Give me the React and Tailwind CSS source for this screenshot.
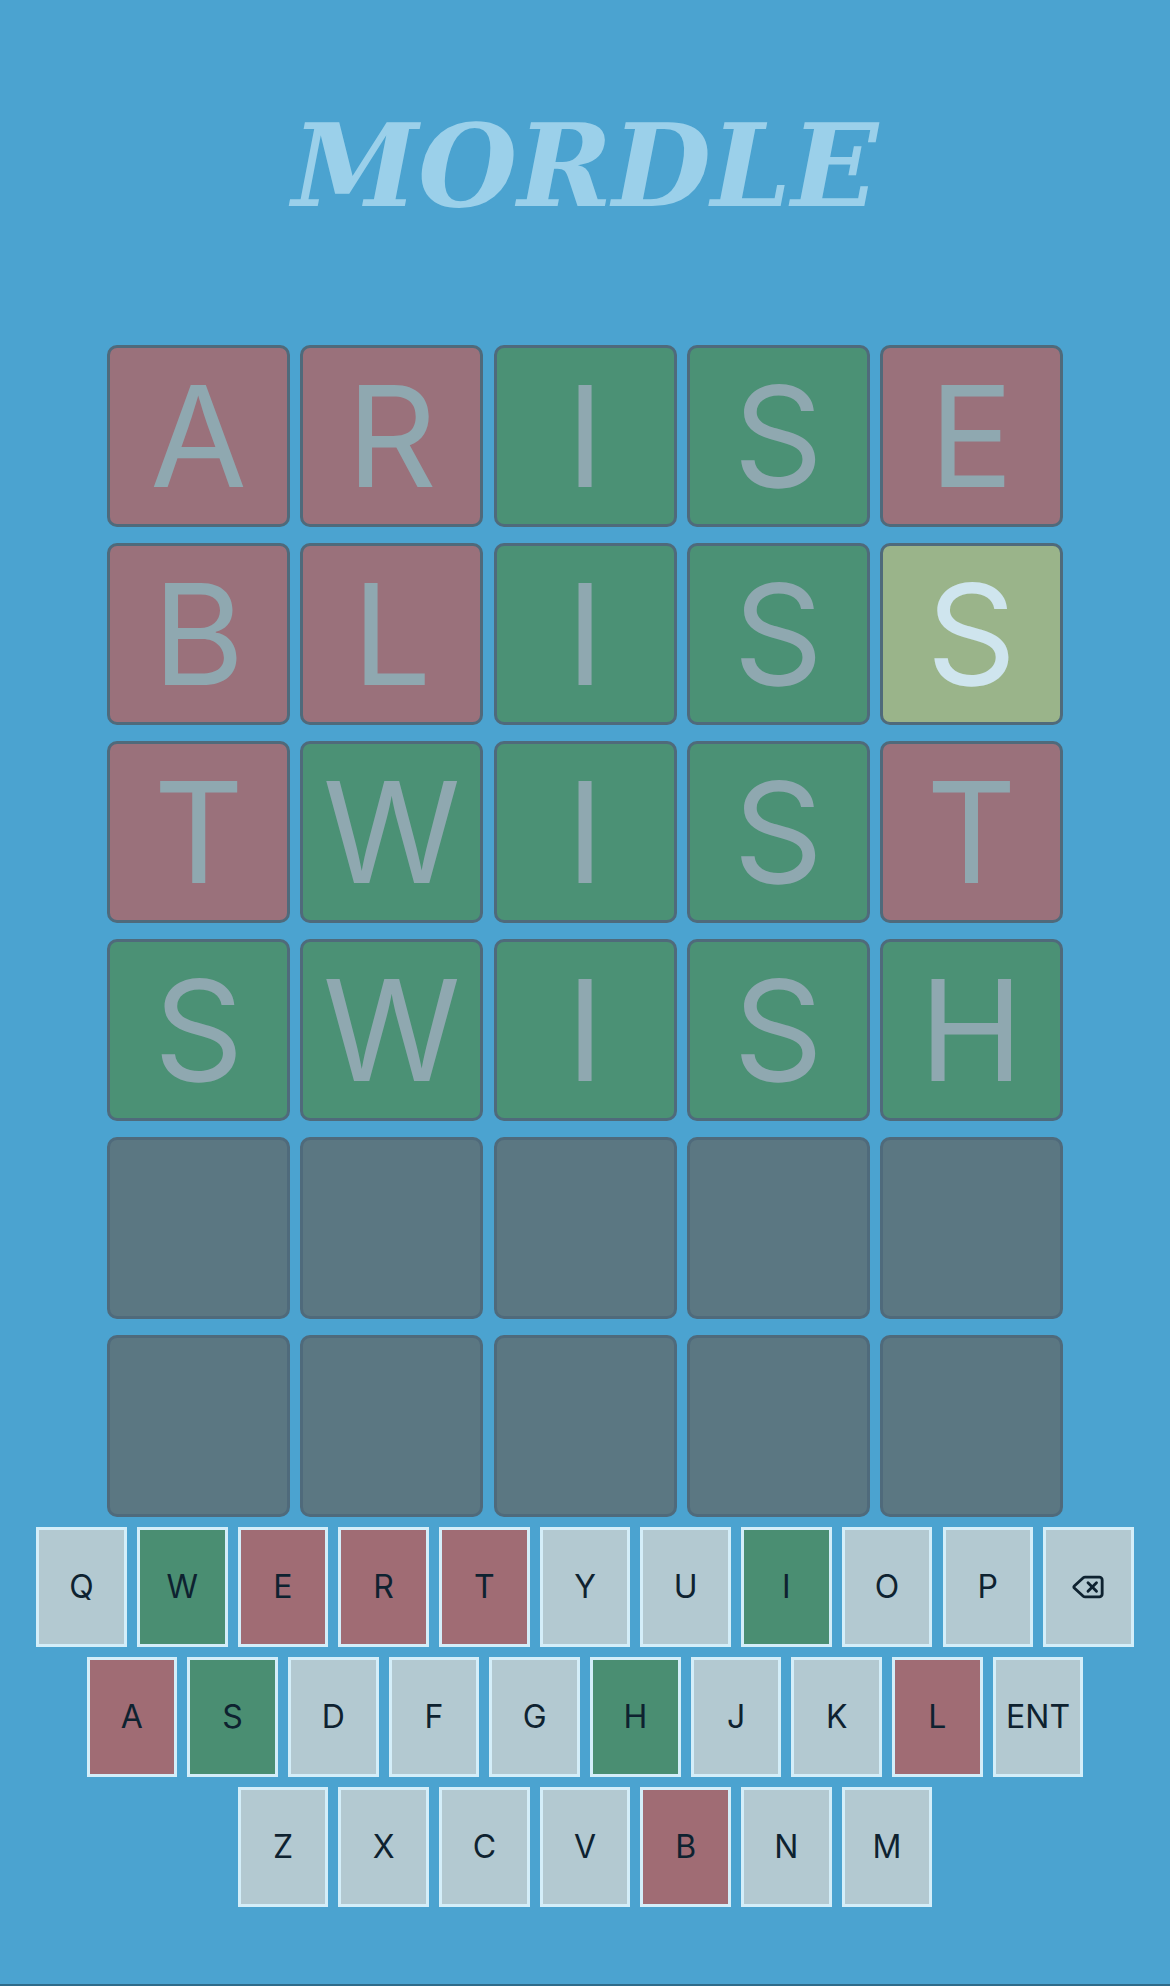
import { Delete } from 'lucide-react';

const guesses = [
  ['ARISE', 'xxggx'],
  ['BLISS', 'xxggy'],
  ['TWIST', 'xgggx'],
  ['SWISH', 'ggggg'],
];

const tileStyle = {
  x: 'bg-[#9a717b] text-[#8fa8b0]',
  g: 'bg-[#4b9175] text-[#8fa8b0]',
  y: 'bg-[#9ab48a] text-[#cfe5ee]',
  e: 'bg-[#5b7782]',
};

const keyRows = [
  ['Q', 'W', 'E', 'R', 'T', 'Y', 'U', 'I', 'O', 'P', 'BACK'],
  ['A', 'S', 'D', 'F', 'G', 'H', 'J', 'K', 'L', 'ENT'],
  ['Z', 'X', 'C', 'V', 'B', 'N', 'M'],
];

const green = ['W', 'I', 'S', 'H'];
const red = ['E', 'R', 'T', 'A', 'L', 'B'];

function Tile({ letter, state }) {
  return (
    <div
      className={`w-[183px] h-[182px] rounded-[10px] border-[3px] border-[#4f6a7b] flex items-center justify-center text-[140px] leading-none ${tileStyle[state]}`}
    >
      {letter}
    </div>
  );
}

function Key({ k }) {
  let bg = 'bg-[#b3c9d1]';
  if (green.includes(k)) bg = 'bg-[#4a8e72]';
  if (red.includes(k)) bg = 'bg-[#a06c74]';
  return (
    <div
      className={`w-[90.5px] h-[120px] border-[3px] border-[#d4eef9] flex items-center justify-center text-[32px] leading-none text-[#0e2230] ${bg}`}
    >
      {k === 'BACK' ? <Delete size={34} strokeWidth={2} /> : k}
    </div>
  );
}

export default function App() {
  const rows = [];
  for (let r = 0; r < 6; r++) {
    const g = guesses[r];
    const cells = [];
    for (let c = 0; c < 5; c++) {
      cells.push(g ? { letter: g[0][c], state: g[1][c] } : { letter: '', state: 'e' });
    }
    rows.push(cells);
  }

  return (
    <div className="bg-[#2f6b8a] pb-[2px]" style={{ fontFamily: 'Inter, "Noto Sans", sans-serif' }}>
      <div className="bg-[#4ba3d0] h-[1984px] flex flex-col items-center">
        <h1
          className="mt-[109px] text-[114px] leading-none font-bold italic text-[#9bd0ea]"
          style={{ fontFamily: '"DejaVu Serif", "Liberation Serif", serif' }}
        >
          MORDLE
        </h1>

        <div className="mt-[122px] grid grid-cols-5 gap-x-[10.2px] gap-y-[16px]">
          {rows.map((cells, r) =>
            cells.map((cell, c) => <Tile key={`${r}-${c}`} letter={cell.letter} state={cell.state} />)
          )}
        </div>

        <div className="mt-[10px] flex flex-col items-center gap-[10px]">
          {keyRows.map((row, i) => (
            <div key={i} className="flex gap-[10.2px]">
              {row.map((k) => (
                <Key key={k} k={k} />
              ))}
            </div>
          ))}
        </div>
      </div>
    </div>
  );
}
